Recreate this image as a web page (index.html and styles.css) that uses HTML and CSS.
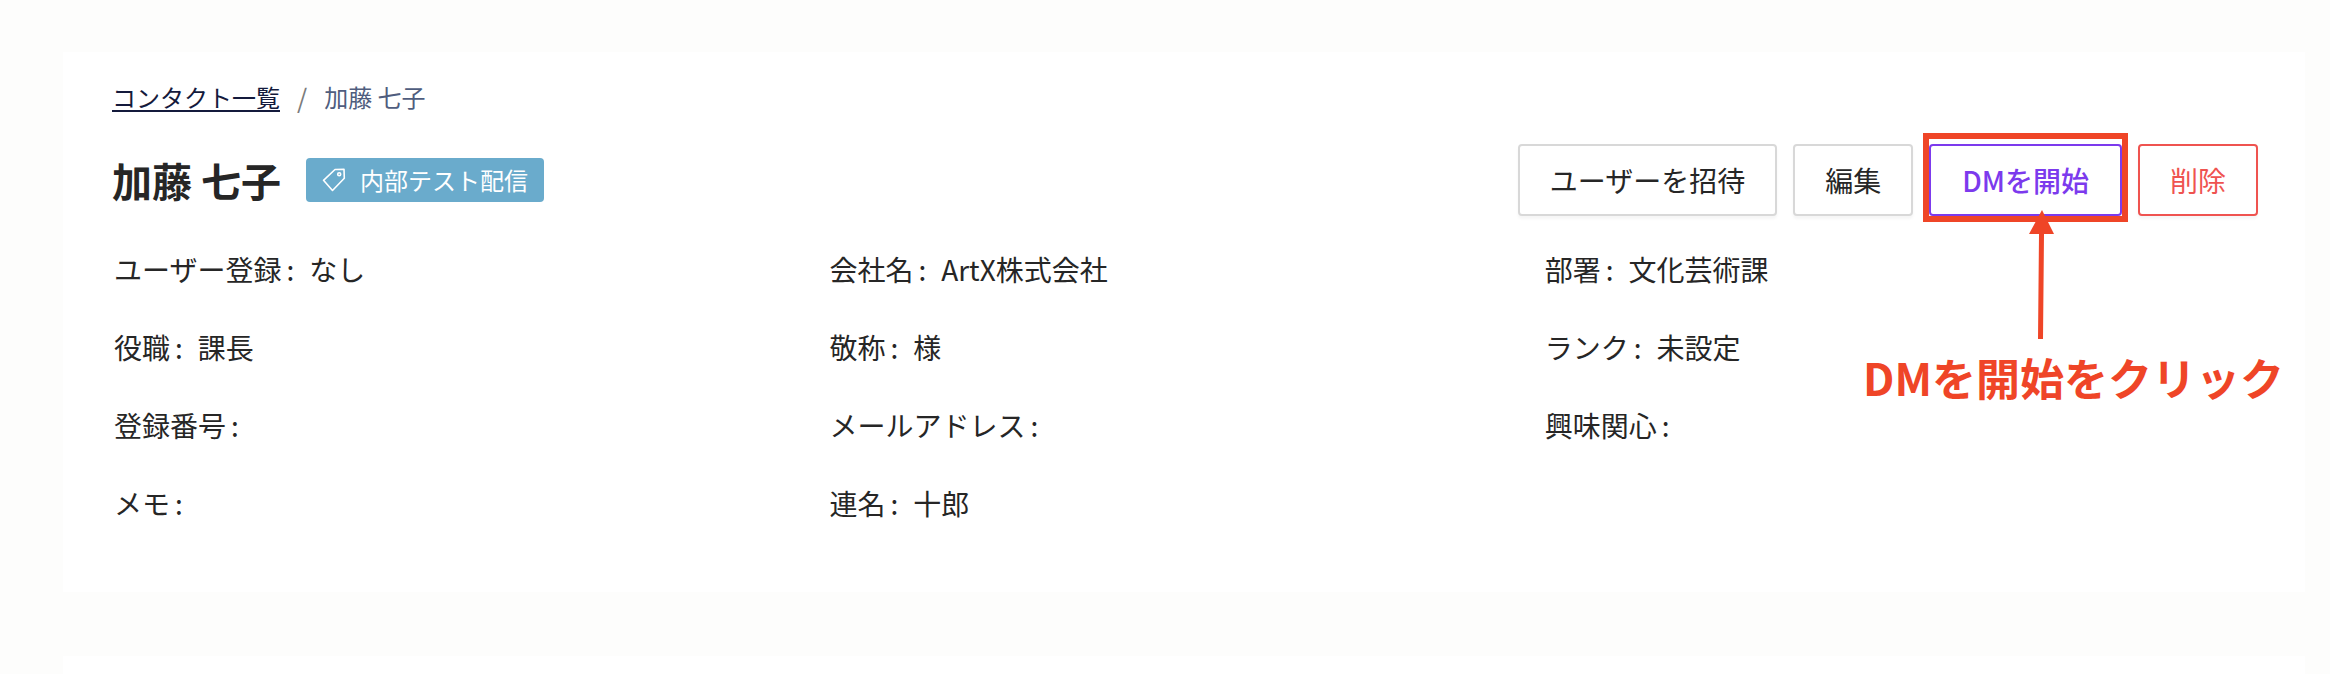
FILE: index.html
```html
<!DOCTYPE html>
<html lang="ja">
<head>
<meta charset="utf-8">
<title>加藤 七子</title>
<link rel="stylesheet" href="styles.css">
</head>
<body>
<main class="page">
  <section class="card">
    <nav class="crumbs">
      <a class="crumb-link" href="#">コンタクト一覧</a>
      <span class="crumb-sep">/</span>
      <span class="crumb-current">加藤 七子</span>
    </nav>
    <header class="head">
      <div class="title-wrap">
        <h1 class="title">加藤 七子</h1>
        <span class="tag">
          <svg class="tag-icon" viewBox="0 0 24 24" fill="none" stroke="currentColor" stroke-width="1.6" stroke-linejoin="round"><path d="M1.5 12.3 13 1.5l9-.2.3 9L10.5 22.5z"/><circle cx="17.2" cy="6.2" r="1.5"/></svg>
          内部テスト配信
        </span>
      </div>
      <div class="actions">
        <button class="btn">ユーザーを招待</button>
        <button class="btn">編集</button>
        <button class="btn btn-dm">DMを開始</button>
        <button class="btn btn-del">削除</button>
      </div>
    </header>
    <div class="fields">
      <p class="field">ユーザー登録<span class="colon">:</span>なし</p>
      <p class="field">会社名<span class="colon">:</span>ArtX株式会社</p>
      <p class="field">部署<span class="colon">:</span>文化芸術課</p>
      <p class="field">役職<span class="colon">:</span>課長</p>
      <p class="field">敬称<span class="colon">:</span>様</p>
      <p class="field">ランク<span class="colon">:</span>未設定</p>
      <p class="field">登録番号<span class="colon">:</span></p>
      <p class="field">メールアドレス<span class="colon">:</span></p>
      <p class="field">興味関心<span class="colon">:</span></p>
      <p class="field">メモ<span class="colon">:</span></p>
      <p class="field">連名<span class="colon">:</span>十郎</p>
    </div>
  </section>
  <section class="card-next"></section>
</main>
<div class="mark-box"></div>
<svg class="mark-arrow" viewBox="0 0 28 130"><path d="M14 0 26 24H16L15 129H10L11 24H1z"/></svg>
<div class="mark-text">DMを開始をクリック</div>
</body>
</html>
```
FILE: styles.css
```css
* { box-sizing: border-box; }
html, body { margin: 0; height: 100%; }
body {
  background: #fdfdfc;
  color: #262626;
  font-family: "Noto Sans CJK JP", "Noto Sans", sans-serif;
  overflow: hidden;
  position: relative;
}
.page { padding: 52px 25px 0 63px; }
.card { background: #fff; padding: 28px 47px 0 49px; height: 540px; }
.card-next { background: #fff; margin-top: 64px; height: 18px; }
.crumbs { display: flex; align-items: center; height: 34px; font-size: 24px; line-height: 34px; }
.crumb-link { color: #141a3c; text-decoration: underline; text-underline-offset: 3px; }
.crumb-sep { color: #7b7b7b; margin: 0 17px; font-size: 26px; }
.crumb-current { color: #4f5d7e; }
.head { display: flex; justify-content: space-between; align-items: center; margin-top: 30px; height: 72px; }
.title-wrap { display: flex; align-items: center; gap: 25px; }
.title { margin: 0; font-size: 40px; line-height: 44px; font-weight: 700; color: #262626; }
.tag {
  display: flex; align-items: center; gap: 14px;
  height: 44px; padding: 0 16px;
  background: #6aabcc; color: #fff;
  border-radius: 4px; font-size: 24px; line-height: 1;
}
.tag-icon { width: 24px; height: 24px; }
.actions { display: flex; gap: 16px; }
.btn {
  height: 72px; padding: 0 30px;
  background: #fff; border: 2px solid #d8d8d8; border-radius: 4px;
  box-shadow: 0 3px 3px rgba(0,0,0,.04);
  font: 400 28px/1 "Noto Sans CJK JP", sans-serif; color: #262626;
}
.btn-dm { border-color: #7c3aed; color: #7c3aed; font-weight: 500; padding: 0 31px; }
.btn-del { border-color: #ef5350; color: #ef5350; }
.fields {
  display: grid; grid-template-columns: repeat(3, 715.4px);
  grid-auto-rows: 78px; margin-top: 14px;
}
.field { margin: 0; font-size: 28px; line-height: 78px; padding-left: 2px; white-space: nowrap; }
.colon { margin: 0 15px 0 5px; }
.mark-box { position: absolute; left: 1923px; top: 133px; width: 205px; height: 89px; border: 6px solid #ef4527; }
.mark-arrow { position: absolute; left: 2028px; top: 210px; width: 28px; height: 130px; fill: #ef4527; }
.mark-text { position: absolute; left: 1863px; top: 347px; font-size: 44px; line-height: 60px; font-weight: 700; color: #ef4527; white-space: nowrap; }
```
